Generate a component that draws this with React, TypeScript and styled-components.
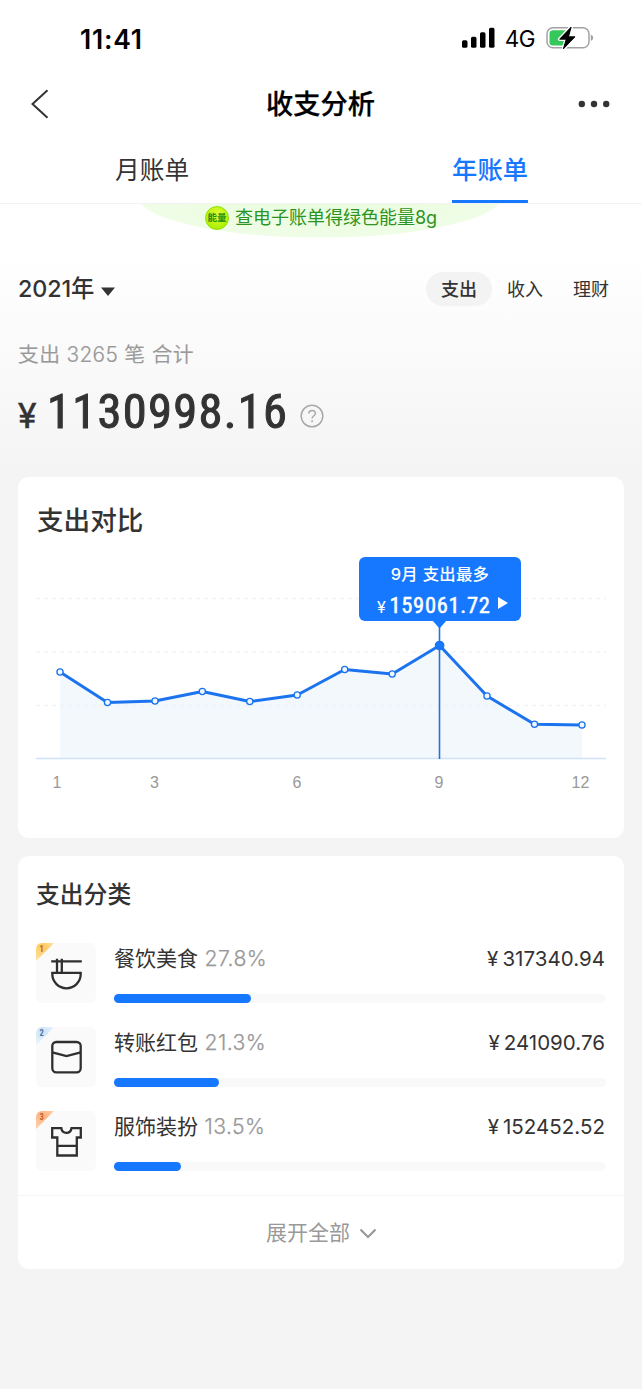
import React from "react";
import styled, { createGlobalStyle } from "styled-components";

const GlobalStyle = createGlobalStyle`
  * { box-sizing: border-box; }
  body {
    margin: 0;
    background: #f4f4f4;
    color: #333;
    font-family: Inter, "Noto Sans CJK SC", sans-serif;
  }
`;

const Page = styled.div`
  width: 642px;
  min-height: 1389px;
  overflow: hidden;
  background: linear-gradient(#fff 0, #fff 250px, #f4f4f4 480px);
`;

const Header = styled.header`
  background: #fff;
  height: 204px;
  border-bottom: 1px solid #f3f3f5;
`;

const StatusBar = styled.div`
  display: flex;
  justify-content: space-between;
  align-items: center;
  height: 76px;
  padding: 0 48px 0 80px;
  color: #000;
`;

const Clock = styled.span`
  font-size: 26.5px;
  font-weight: 600;
  letter-spacing: 0.8px;
  line-height: 30px;
  padding-top: 1px;
`;

const StatusIcons = styled.div`
  display: flex;
  align-items: center;
`;

const Network = styled.span`
  font-size: 22.5px;
  line-height: 28px;
  padding-top: 2px;
  margin: 0 11px 0 10px;
  letter-spacing: -0.5px;
`;

const NavBar = styled.div`
  display: flex;
  align-items: center;
  justify-content: space-between;
  height: 56px;
  padding: 0 32px 0 30px;
`;

const NavTitle = styled.h1`
  margin: 0;
  color: #000;
  font-size: 27.2px;
  font-weight: 500;
  line-height: 40px;
  padding: 2px 0 0 13px;
  -webkit-text-stroke: 0.25px currentColor;
`;

const Tabs = styled.nav`
  display: flex;
  justify-content: space-between;
  height: 72px;
  padding: 0 114px 0 115px;
`;

const Tab = styled.span<{ $active?: boolean }>`
  height: 71px;
  padding-top: 19px;
  line-height: 38px;
  font-size: ${(p) => (p.$active ? 25.3 : 24.7)}px;
  font-weight: ${(p) => (p.$active ? 500 : 400)};
  color: ${(p) => (p.$active ? "#1677ff" : "#333")};
  background: ${(p) =>
    p.$active ? "linear-gradient(#1677ff, #1677ff) bottom / 100% 3px no-repeat" : "none"};
`;

const Banner = styled.div`
  display: flex;
  justify-content: center;
  height: 34px;
  background: radial-gradient(ellipse 185px 43px at 320px -9px, #e8fcdc 0, #effde6 98%, transparent 100%);
`;

const BannerText = styled.span`
  display: flex;
  align-items: center;
  gap: 6px;
  height: 27px;
  font-size: 18px;
  line-height: 26px;
  color: #2d9322;
`;

const Energy = styled.i`
  width: 24px;
  height: 24px;
  border-radius: 50%;
  border: 1px solid #8fe000;
  background: radial-gradient(circle at 50% 35%, #e2ff35, #a8ee00 80%);
  color: #238b14;
  font-style: normal;
  font-size: 9.5px;
  font-weight: 700;
  line-height: 21px;
  text-align: center;
  white-space: nowrap;
`;

const Filters = styled.div`
  display: flex;
  align-items: center;
  justify-content: space-between;
  height: 34px;
  margin: 34px 18px 0 18px;
`;

const Year = styled.div`
  display: flex;
  align-items: center;
  font-size: 23.3px;
  font-weight: 500;
  line-height: 32px;
  letter-spacing: -0.1px;
`;

const Pills = styled.div`
  display: flex;
`;

const Pill = styled.span<{ $active?: boolean }>`
  width: 66px;
  height: 34px;
  border-radius: 17px;
  line-height: 35px;
  text-align: center;
  font-size: 18px;
  font-weight: ${(p) => (p.$active ? 500 : 400)};
  background: ${(p) => (p.$active ? "#f3f3f3" : "transparent")};
  color: #333;
`;

const Count = styled.p`
  margin: 34px 0 0 18px;
  color: #999;
  font-size: 20.8px;
  font-weight: 350;
  line-height: 30px;
  letter-spacing: 0.35px;
  -webkit-text-stroke: 0.2px currentColor;
`;

const Total = styled.div`
  display: flex;
  align-items: baseline;
  height: 60px;
  margin: 12px 0 35px 18px;
  font-family: Roboto, sans-serif;
  font-weight: 400;
`;

const Currency = styled.span`
  width: 29px;
  font-size: 35px;
  -webkit-text-stroke: 0.5px currentColor;
`;

const TotalValue = styled.span`
  width: 239px;
  font-size: 48.5px;
  font-stretch: 85%;
  line-height: 60px;
  letter-spacing: 1.3px;
  white-space: nowrap;
  margin-right: 14px;
  -webkit-text-stroke: 1px currentColor;
`;

const Card = styled.section`
  margin: 0 18px 18px;
  background: #fff;
  border-radius: 11px;
`;

const ChartTitle = styled.h2`
  margin: 0;
  padding: 23px 0 0 19px;
  font-size: 26.6px;
  font-weight: 500;
  line-height: 40px;
`;

const ChartBox = styled.div`
  position: relative;
  height: 298px;
`;

const ChartSvg = styled.svg`
  display: block;
`;

const Tooltip = styled.div`
  position: absolute;
  left: 341px;
  top: 17px;
  width: 162px;
  height: 64px;
  padding-top: 4px;
  border-radius: 6px;
  background: #1677ff;
  color: #fff;
  text-align: center;
  font-size: 16.4px;
  font-weight: 500;
  line-height: 27px;
  letter-spacing: 0.25px;
`;

const TooltipValue = styled.div`
  display: flex;
  align-items: baseline;
  height: 32px;
  padding-left: 18px;
  font-family: Roboto, sans-serif;
  font-weight: 400;
  font-size: 22.5px;
  line-height: 34px;
`;

const TooltipNumber = styled.span`
  font-stretch: 85%;
  letter-spacing: 0.7px;
  -webkit-text-stroke: 0.5px currentColor;
`;

const SmallYen = styled.span`
  width: 12.5px;
  font-size: 16.5px;
  text-align: left;
`;

const CategoryTitle = styled.h2`
  margin: 0;
  padding: 20px 0 0 18px;
  height: 87px;
  font-size: 23.8px;
  font-weight: 500;
  line-height: 38px;
`;

const CategoryRow = styled.div`
  display: flex;
  gap: 18px;
  height: 60px;
  margin: 0 18px 24px;
`;

const Body = styled.div`
  flex: 1;
`;

const Labels = styled.div`
  display: flex;
  height: 51px;
  line-height: 31px;
  font-size: 21px;
`;

const Percent = styled.span`
  margin-left: 6.5px;
  color: #999;
  font-weight: 300;
  font-size: 21.2px;
  letter-spacing: 0.4px;
  -webkit-text-stroke: 0.25px currentColor;
`;

const Amount = styled.span`
  margin-left: auto;
  margin-right: 1px;
  font-size: 20.5px;
  letter-spacing: 0.03px;
  color: #333;
`;

const Yen = styled.span`
  margin-right: 4px;
`;

const Track = styled.div`
  height: 9px;
  border-radius: 5px;
  background: #f9f9f9;
`;

const Fill = styled.div`
  height: 9px;
  border-radius: 5px;
  background: #1677ff;
`;

const Expand = styled.div`
  display: flex;
  justify-content: center;
  align-items: center;
  gap: 9px;
  height: 74px;
  padding-left: 1px;
  border-top: 1px solid #f5f5f5;
  color: #999;
  font-size: 21px;
  line-height: 30px;
`;

const TileSvg = styled.svg`
  flex: none;
  border-radius: 6px;
  background: #fafafa;
`;

const RankNumber = styled.text`
  font-family: Roboto, sans-serif;
  font-size: 8.4px;
  font-weight: 700;
  font-stretch: 75%;
`;

const points = [
  [60, 672], [107.5, 702.5], [155, 701], [202.3, 691.5], [249.8, 701.5], [297.2, 695],
  [344.7, 669.5], [392.2, 674], [439.6, 645.5], [487, 696], [534.5, 724.2], [582, 725],
];

const axis: [string, number][] = [["1", 57], ["3", 154.5], ["6", 297], ["9", 439], ["12", 580.5]];

const line = points.map((p) => p.join(",")).join(" ");

const Chart = () => (
  <ChartSvg width="606" height="298" viewBox="18 540 606 298">
    {[598.5, 652, 705.5].map((y) => (
      <line key={y} x1="36" x2="606" y1={y} y2={y} stroke="#f2f3f7" strokeWidth="1.3" strokeDasharray="4 4" />
    ))}
    <polygon points={`60,758 ${line} 582,758`} fill="#e7f2fa" fillOpacity="0.5" />
    <line x1="36" x2="606" y1="758.5" y2="758.5" stroke="#cfe1fb" strokeWidth="1.5" />
    <line x1="439.5" x2="439.5" y1="620" y2="759" stroke="#2272dc" strokeWidth="1.6" />
    <polyline points={line} fill="none" stroke="#1c73ee" strokeWidth="3" strokeLinejoin="round" />
    {points.map(([x, y], i) => (
      <circle key={x} cx={x} cy={y} r={i === 8 ? 4.2 : 3.1} fill={i === 8 ? "#1677ff" : "#f0f8ff"} stroke="#1c73ee" strokeWidth="1.3" />
    ))}
    <path d="M432.5 620.5h14l-7 8z" fill="#1677ff" />
    {axis.map(([t, x]) => (
      <text key={t} x={x} y="788" textAnchor="middle" fontSize="16" fill="#999" fontFamily="Liberation Sans, sans-serif">{t}</text>
    ))}
  </ChartSvg>
);

const icons = [
  <g key="bowl">
    <path d="M15.2 18.3h30.6M21 15.7v14M25.8 15.7v14" />
    <path d="M16.3 29.9h28.4v1.2a14.2 14.2 0 0 1-28.4 0z" />
  </g>,
  <g key="envelope">
    <rect x="16.3" y="15" width="28.4" height="30.3" rx="4" />
    <path d="M16.3 25.3l14.2 3.8 14.2-3.8" />
  </g>,
  <g key="shirt">
    <path d="M16.2 17.2h9.1c.9 6.2 9.2 6.2 10.2 0h9.3v9.3h-4v18H21.3v-18h-5.1zM21.3 34.8h19.5" />
  </g>,
];

const rows = [
  { name: "餐饮美食", percent: "27.8%", amount: "317340.94", width: 137, from: "#ffc95c", to: "#ffe3a6", ink: "#b8672a" },
  { name: "转账红包", percent: "21.3%", amount: "241090.76", width: 105, from: "#cfe4f6", to: "#e9f3fb", ink: "#4672a5" },
  { name: "服饰装扮", percent: "13.5%", amount: "152452.52", width: 66.5, from: "#ffb27d", to: "#ffd0ae", ink: "#b96638" },
];

const Tile = ({ index }: { index: number }) => {
  const r = rows[index];
  return (
    <TileSvg width="60" height="60" viewBox="0 0 60 60">
      <defs>
        <linearGradient id={`rank${index}`} x1="0" y1="1" x2="1" y2="0">
          <stop stopColor={r.to} />
          <stop offset="0.6" stopColor={r.from} />
          <stop offset="1" stopColor={r.to} />
        </linearGradient>
      </defs>
      <path d="M0 0h18L0 18z" fill={`url(#rank${index})`} />
      <RankNumber x="3.4" y="8.8" fill={r.ink}>{index + 1}</RankNumber>
      <g fill="none" stroke="#2f2f2f" strokeWidth="2.3">{icons[index]}</g>
    </TileSvg>
  );
};

const Signal = () => (
  <svg width="34" height="22" viewBox="0 0 34 22">
    <rect x="1" y="13.3" width="5.5" height="7.5" rx="1.6" />
    <rect x="10" y="9.8" width="5.5" height="11" rx="1.6" />
    <rect x="19" y="5.3" width="5.5" height="15.5" rx="1.6" />
    <rect x="28" y="0.8" width="5.5" height="20" rx="1.6" />
  </svg>
);

const Battery = () => (
  <svg width="48" height="26" viewBox="0 0 48 26">
    <rect x="1" y="2.8" width="42" height="20" rx="6" fill="none" stroke="#a2a2a2" strokeWidth="1.5" />
    <path d="M44.8 9.5q2.4 1 2.4 3.3t-2.4 3.3z" fill="#a2a2a2" />
    <rect x="3.5" y="5.2" width="18" height="15.2" rx="3.5" fill="#34c759" />
    <path d="M25.2 2L13.6 14.2h6.6l-2.9 9.8L29 11.8h-6.5z" fill="#000" stroke="#fff" strokeWidth="3.5" strokeLinejoin="round" paintOrder="stroke" />
    <path d="M25.2 2L13.6 14.2h6.6l-2.9 9.8L29 11.8h-6.5z" fill="#000" stroke="#000" strokeWidth="0.8" strokeLinejoin="round" />
  </svg>
);

export default function App() {
  return (
    <Page>
      <GlobalStyle />
      <Header>
        <StatusBar>
          <Clock>11:41</Clock>
          <StatusIcons>
            <Signal />
            <Network>4G</Network>
            <Battery />
          </StatusIcons>
        </StatusBar>
        <NavBar>
          <svg width="20" height="30" viewBox="0 0 20 30">
            <path d="M17.5 1.2L2.5 15l15 13.8" fill="none" stroke="#333" strokeWidth="2" />
          </svg>
          <NavTitle>收支分析</NavTitle>
          <svg width="32" height="8" viewBox="0 0 32 8" fill="#333">
            <circle cx="3.8" cy="4" r="3.2" />
            <circle cx="16" cy="4" r="3.2" />
            <circle cx="28.2" cy="4" r="3.2" />
          </svg>
        </NavBar>
        <Tabs>
          <Tab>月账单</Tab>
          <Tab $active>年账单</Tab>
        </Tabs>
      </Header>
      <Banner>
        <BannerText>
          <Energy>能量</Energy>
          <span>查电子账单得绿色能量8g</span>
        </BannerText>
      </Banner>
      <Filters>
        <Year>
          <span>2021年</span>
          <svg width="22" height="16" viewBox="0 0 22 16">
            <path d="M7 6.5h14l-7 8.6z" fill="#333" />
          </svg>
        </Year>
        <Pills>
          <Pill $active>支出</Pill>
          <Pill>收入</Pill>
          <Pill>理财</Pill>
        </Pills>
      </Filters>
      <Count>支出 3265 笔 合计</Count>
      <Total>
        <Currency>¥</Currency>
        <TotalValue>1130998.16</TotalValue>
        <svg width="24" height="24" viewBox="0 0 24 24">
          <circle cx="12" cy="12" r="10.8" fill="none" stroke="#aaa" strokeWidth="1.5" />
          <path d="M8.8 9.6c0-4.2 6.6-4.2 6.6-.3 0 2.4-3.3 2.5-3.3 5.2" fill="none" stroke="#aaa" strokeWidth="1.5" />
          <circle cx="12.1" cy="17.2" r="1" fill="#aaa" />
        </svg>
      </Total>
      <Card>
        <ChartTitle>支出对比</ChartTitle>
        <ChartBox>
          <Chart />
          <Tooltip>
            9月 支出最多
            <TooltipValue>
              <SmallYen>¥</SmallYen>
              <TooltipNumber>159061.72</TooltipNumber>
              <svg width="18" height="18" viewBox="0 0 18 18">
                <path d="M7 2l10 6-10 6z" fill="#fff" />
              </svg>
            </TooltipValue>
          </Tooltip>
        </ChartBox>
      </Card>
      <Card>
        <CategoryTitle>支出分类</CategoryTitle>
        {rows.map((r, i) => (
          <CategoryRow key={r.name}>
            <Tile index={i} />
            <Body>
              <Labels>
                <span>{r.name}</span>
                <Percent>{r.percent}</Percent>
                <Amount><Yen>¥</Yen>{r.amount}</Amount>
              </Labels>
              <Track><Fill style={{ width: r.width }} /></Track>
            </Body>
          </CategoryRow>
        ))}
        <Expand>
          <span>展开全部</span>
          <svg width="18" height="12" viewBox="0 0 18 12">
            <path d="M1.5 2.5L9 10l7.5-7.5" fill="none" stroke="#999" strokeWidth="2.2" />
          </svg>
        </Expand>
      </Card>
    </Page>
  );
}
